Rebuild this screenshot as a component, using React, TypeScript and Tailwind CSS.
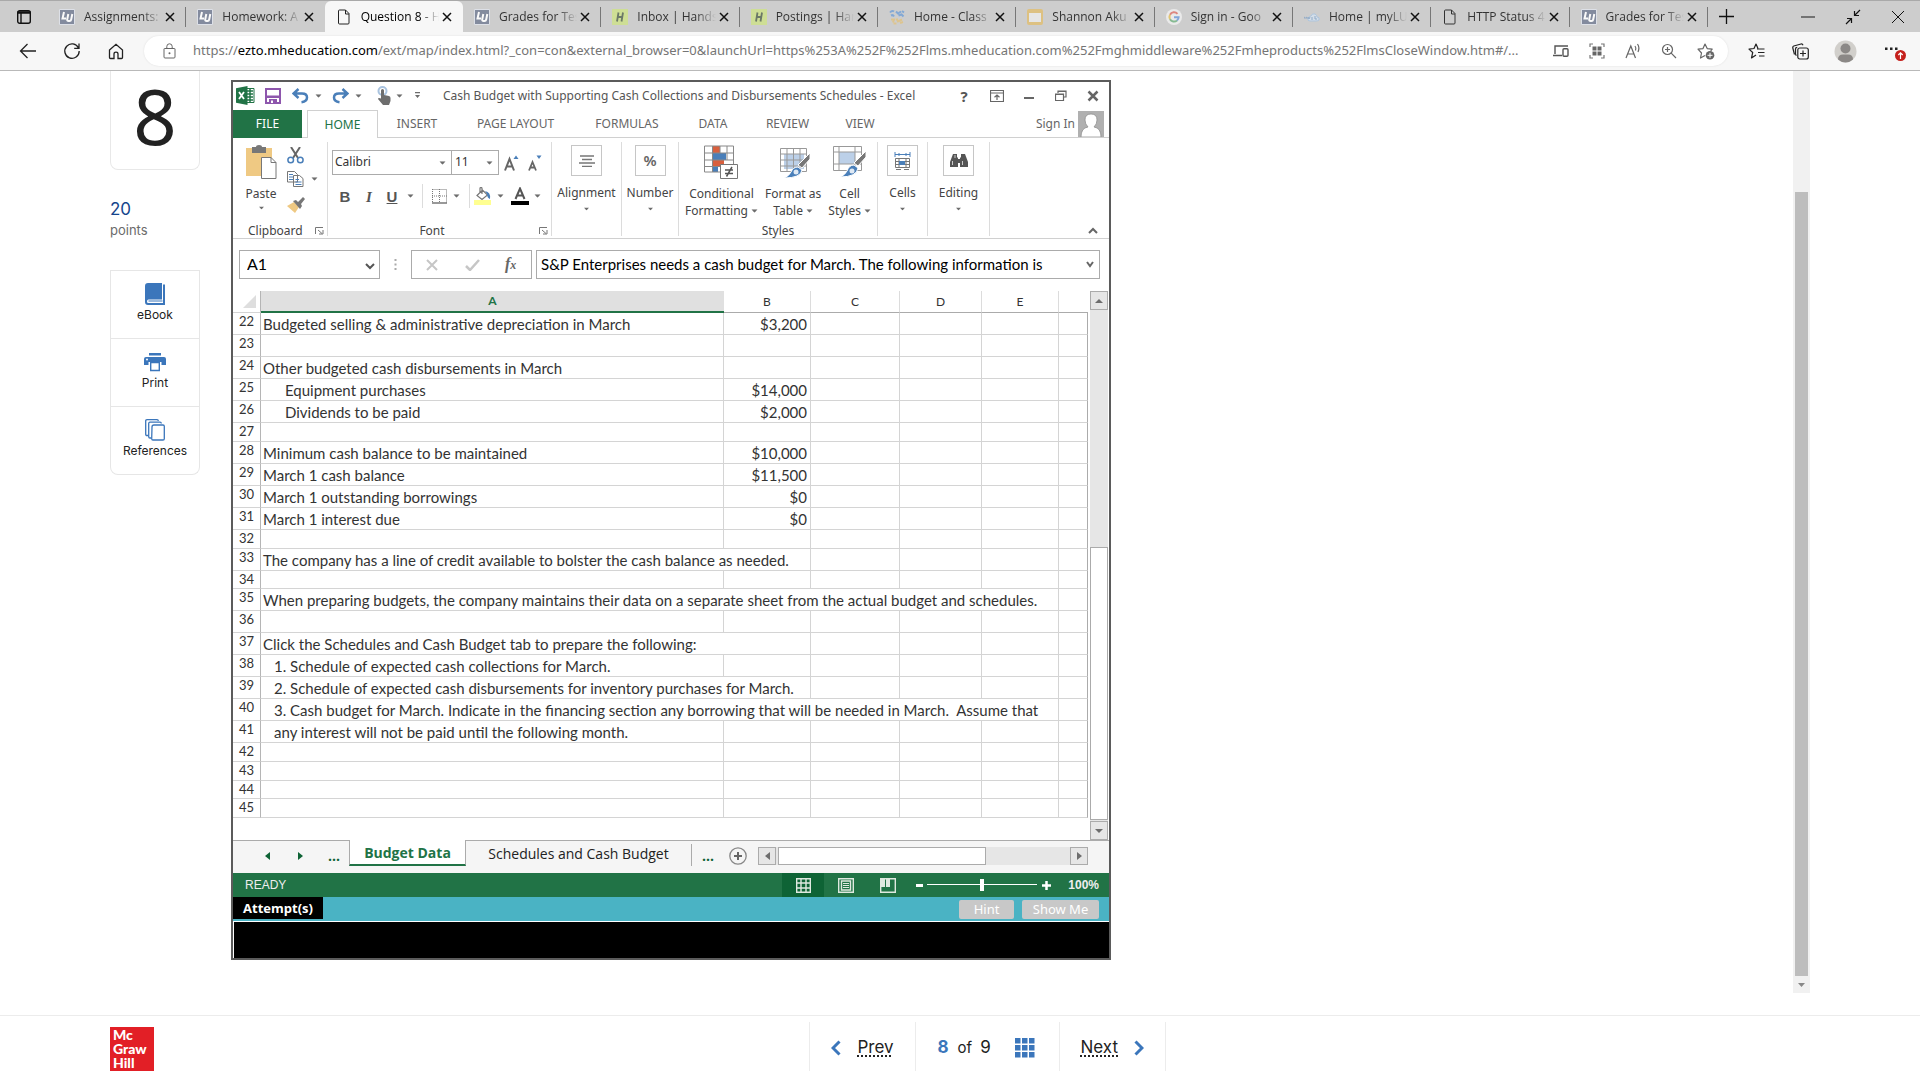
import { useState, type ReactNode } from 'react'

type TabInfo = { title: string; icon: string }

const TABS: TabInfo[] = [
    { title: 'Assignments:', icon: 'lu' },
    { title: 'Homework: A', icon: 'lu' },
    { title: 'Question 8 - H', icon: 'page' },
    { title: 'Grades for Tes', icon: 'lu' },
    { title: 'Inbox | Hands', icon: 'h' },
    { title: 'Postings | Han', icon: 'h' },
    { title: 'Home - Class', icon: 'people' },
    { title: 'Shannon Aku', icon: 'slides' },
    { title: 'Sign in - Goo', icon: 'google' },
    { title: 'Home | myLU', icon: 'cloud' },
    { title: 'HTTP Status 4', icon: 'page' },
    { title: 'Grades for Tes', icon: 'lu' },
]

type Row = { n: number; h: string; text?: string; amount?: string; indent?: string; span?: number }

const TALL = 'h-[22px]'
const SHORT = 'h-[19px]'

const ROWS: Row[] = [
    { n: 22, h: TALL, text: 'Budgeted selling & administrative depreciation in March', amount: '$3,200' },
    { n: 23, h: TALL },
    { n: 24, h: TALL, text: 'Other budgeted cash disbursements in March' },
    { n: 25, h: TALL, text: 'Equipment purchases', amount: '$14,000', indent: 'pl-[24px]' },
    { n: 26, h: TALL, text: 'Dividends to be paid', amount: '$2,000', indent: 'pl-[24px]' },
    { n: 27, h: SHORT },
    { n: 28, h: TALL, text: 'Minimum cash balance to be maintained', amount: '$10,000' },
    { n: 29, h: TALL, text: 'March 1 cash balance', amount: '$11,500' },
    { n: 30, h: TALL, text: 'March 1 outstanding borrowings', amount: '$0' },
    { n: 31, h: TALL, text: 'March 1 interest due', amount: '$0' },
    { n: 32, h: SHORT },
    { n: 33, h: TALL, text: 'The company has a line of credit available to bolster the cash balance as needed.', span: 2 },
    { n: 34, h: 'h-[18px]' },
    { n: 35, h: TALL, text: 'When preparing budgets, the company maintains their data on a separate sheet from the actual budget and schedules.', span: 5 },
    { n: 36, h: TALL },
    { n: 37, h: TALL, text: 'Click the Schedules and Cash Budget tab to prepare the following:', span: 2 },
    { n: 38, h: TALL, text: '1. Schedule of expected cash collections for March.', indent: 'pl-[13px]' },
    { n: 39, h: TALL, text: '2. Schedule of expected cash disbursements for inventory purchases for March.', indent: 'pl-[13px]', span: 2 },
    { n: 40, h: TALL, text: '3. Cash budget for March. Indicate in the financing section any borrowing that will be needed in March.\u00a0 Assume that', indent: 'pl-[13px]', span: 5 },
    { n: 41, h: TALL, text: 'any interest will not be paid until the following month.', indent: 'pl-[13px]' },
    { n: 42, h: SHORT },
    { n: 43, h: SHORT },
    { n: 44, h: 'h-[18px]' },
    { n: 45, h: SHORT },
]

const COLS = ['A', 'B', 'C', 'D', 'E', '']

function Svg({ w, h, box, className = '', children }: { w: number; h: number; box?: string; className?: string; children: ReactNode }) {
    return (
        <svg width={w} height={h} viewBox={box ?? `0 0 ${w} ${h}`} fill="none" className={`shrink-0 ${className}`} aria-hidden="true">
            {children}
        </svg>
    )
}

function Caret({ className = '' }: { className?: string }) {
    return (
        <Svg w={7} h={4} className={className}>
            <path d="M0 0h7L3.500 4z" fill="#6d6d6d" />
        </Svg>
    )
}

function Launcher({ className = '' }: { className?: string }) {
    return (
        <button aria-label="More options" className={className}>
            <Svg w={9} h={8}>
                <path d="M.5 7V.5H8M3 3l4 3.500M8 3v4H4" stroke="#777" />
            </Svg>
        </button>
    )
}

function Favicon({ kind }: { kind: string }) {
    if (kind === 'lu')
        return (
            <Svg w={16} h={16}>
                <path d="M.5.500h15v15H.5z" fill="#7b8499" stroke="#dfe3ea" />
                <path d="M5 3L3.500 9.500H7M9.300 5L8.200 10.500q-.2 1.500 1.300 1.500h1q1.400 0 1.700-1.500L13.300 5" stroke="#fff" strokeWidth="2" />
            </Svg>
        )
    if (kind === 'page')
        return (
            <Svg w={14} h={16}>
                <path d="M2.500 1h6L12 4.500V14q0 1-1 1H2.500q-1 0-1-1V2q0-1 1-1zM8.500 1v4H12" stroke="#222" />
            </Svg>
        )
    if (kind === 'h')
        return (
            <Svg w={16} h={16}>
                <path d="M0 0h16v16H0z" fill="#cfe08f" />
                <path d="M6.500 3.500L5 12.500M11 3.500L9.500 12.500M6 8h4.500" stroke="#61705c" strokeWidth="1.800" />
            </Svg>
        )
    if (kind === 'people')
        return (
            <Svg w={16} h={16}>
                <path d="M1 3.500q2-2.500 4-1M2 6.500q2-1 3 1M7 2.500l2 2 3-2M9.500 6.500l3-1 2 2M13 2l2 1.500" stroke="#7ba5d6" strokeWidth="2" />
                <path d="M2 10.500h3l-1 3M7.500 9.500l1.500 3 4-2M4.500 14.500h3M11 14l3-1" stroke="#dfc489" strokeWidth="2" />
            </Svg>
        )
    if (kind === 'slides')
        return (
            <Svg w={16} h={16}>
                <rect width="16" height="16" rx="2" fill="#dfc07a" />
                <path d="M2 4h12v9H2z" fill="#e9e9e9" />
            </Svg>
        )
    if (kind === 'google')
        return (
            <Svg w={16} h={16}>
                <circle cx="8" cy="8" r="8" fill="#eee" />
                <path d="M11.500 4.800A4.600 4.600 0 0 0 4 5.800" stroke="#df8078" strokeWidth="2" />
                <path d="M4 5.800a4.600 4.600 0 0 0 0 4.400" stroke="#e5c568" strokeWidth="2" />
                <path d="M4 10.200a4.600 4.600 0 0 0 7 1.300" stroke="#7fb88c" strokeWidth="2" />
                <path d="M11 11.500a4.600 4.600 0 0 0 1.600-3.300H8" stroke="#7aa2dc" strokeWidth="2" />
            </Svg>
        )
    return (
        <Svg w={16} h={16}>
            <path d="M6 12q-3 0-2-3 1-2 3-2 1-3 4-2 2 1 2 3 3 0 2 3-1 1-3 1z" stroke="#a9c3df" fill="#d5e0ec" />
            <path d="M0 10V8l1.500 1L3 8v2M4 8l1 2 1-2M8 8v3M11 7v3h2" stroke="#8aa7c6" />
        </Svg>
    )
}

function BrowserTabs() {
    const [active, setActive] = useState(2)
    return (
        <div className="flex h-8 border-t border-[#a9a9a9] bg-[#cdcdcd] text-[12px]">
            <button aria-label="Tab actions" className="flex w-[48px] shrink-0 items-center justify-center">
                <Svg w={16} h={16}>
                    <rect x="1.700" y="1.700" width="12.600" height="12.600" rx="2" stroke="#111" strokeWidth="1.400" />
                    <path d="M1.500 3.500h13" stroke="#111" strokeWidth="2.500" />
                    <path d="M5 4v10" stroke="#111" strokeWidth="1.400" />
                </Svg>
            </button>
            <div className="flex w-[1660px] min-w-0">
                {TABS.map((tab, i) => (
                    <div
                        key={i}
                        className={
                            i === active
                                ? 'flex min-w-0 flex-1 items-center rounded-t-md bg-[#f7f7f7] pr-[8px] pl-[11px] text-black'
                                : 'flex min-w-0 flex-1 items-center pr-[8px] pl-[11px] text-[#333]'
                        }
                    >
                        <span className={i === active ? 'flex w-4 justify-center' : 'flex w-4 justify-center opacity-90'}>
                            <Favicon kind={tab.icon} />
                        </span>
                        <button
                            onClick={() => setActive(i)}
                            className="ml-[9px] min-w-0 flex-1 mask-r-from-75% text-left whitespace-nowrap"
                        >
                            {tab.title}
                        </button>
                        <button aria-label="Close tab" className="flex w-4 justify-center">
                            <Svg w={10} h={10}>
                                <path d="M1 1l8 8M9 1L1 9" stroke="#111" strokeWidth="1.500" />
                            </Svg>
                        </button>
                        <span className={i === active || i === active - 1 ? '-mr-[8px] ml-[7px] w-px' : '-mr-[8px] ml-[7px] h-5 w-px bg-[#777]'} />
                    </div>
                ))}
            </div>
            <button aria-label="New tab" className="flex w-9 shrink-0 items-center justify-center">
                <Svg w={15} h={15}>
                    <path d="M7.500 0v15M0 7.500h15" stroke="#111" strokeWidth="1.300" />
                </Svg>
            </button>
            <div className="ml-auto flex items-center">
                <button aria-label="Minimize" className="flex w-[45px] justify-center">
                    <Svg w={14} h={14}><path d="M0 7h14" stroke="#555" strokeWidth="1.500" /></Svg>
                </button>
                <button aria-label="Restore" className="flex w-[45px] justify-center">
                    <Svg w={16} h={16}><path d="M15 1L9.500 6.500M9.500 2v4.500H14M1 15l5.500-5.500M2 9.500h4.500V14" stroke="#111" strokeWidth="1.200" /></Svg>
                </button>
                <button aria-label="Close" className="flex w-[45px] justify-center">
                    <Svg w={12} h={12}><path d="M0 0l12 12M12 0L0 12" stroke="#111" /></Svg>
                </button>
            </div>
        </div>
    )
}

function AddressBar() {
    return (
        <div className="flex h-[39px] items-center border-b border-[#b9b9b9] bg-[#f7f7f7]">
            <button aria-label="Back" className="ml-[19px]">
                <Svg w={18} h={16}><path d="M17 8H1.500M8.500 1L1.500 8l7 7" stroke="#222" strokeWidth="1.300" /></Svg>
            </button>
            <button aria-label="Refresh" className="ml-[26px]">
                <Svg w={18} h={18}>
                    <path d="M15.500 6A7.200 7.200 0 1 0 16.200 9M16 1.500V6.300H11.200" stroke="#222" strokeWidth="1.300" />
                </Svg>
            </button>
            <button aria-label="Home" className="ml-[27px]">
                <Svg w={16} h={17}>
                    <path d="M1.500 7L8 1.300 14.500 7v7.500q0 1-1 1H10V11q0-1.800-2-1.800T6 11v4.500H2.500q-1 0-1-1z" stroke="#222" strokeWidth="1.300" />
                </Svg>
            </button>
            <div className="ml-[20px] flex h-[30px] min-w-0 flex-1 items-center rounded-full bg-white pr-[13px] pl-[19px] shadow-[0_0_2px_#ddd]">
                <Svg w={13} h={16}>
                    <path d="M1.500 5.500h10q.5 0 .5.500v8q0 1-1 1H2q-1 0-1-1V6q0-.5.5-.5zM3.800 5.500V3.500a2.700 2.700 0 0 1 5.400 0v2" stroke="#666" />
                    <circle cx="6.500" cy="10.200" r="1" fill="#666" />
                </Svg>
                <a href="#url" className="ml-[17px] min-w-0 flex-1 font-['Noto_Sans',sans-serif] text-[13px] whitespace-nowrap text-[#757575]">
                    https://<span className="text-black">ezto.mheducation.com</span>/ext/map/index.html?_con=con&amp;external_browser=0&amp;launchUrl=https%253A%252F%252Flms.mheducation.com%252Fmghmiddleware%252Fmheproducts%252FlmsCloseWindow.htm#/...
                </a>
                <div className="ml-[12px] flex shrink-0 items-center gap-[20px]">
                    <button aria-label="Send to device">
                        <Svg w={16} h={12}>
                            <path d="M15 1H2v8M0 10.500h9" stroke="#555" strokeWidth="1.400" />
                            <rect x="10" y="3.700" width="5" height="7.500" rx="1" stroke="#555" strokeWidth="1.400" />
                        </Svg>
                    </button>
                    <button aria-label="Apps">
                        <Svg w={16} h={16}>
                            <path d="M1 4V1h3M12 1h3v3M15 12v3h-3M4 15H1v-3" stroke="#777" strokeWidth="1.200" />
                            <path d="M3.500 3.500h4v4h-4zM8.500 3.500h4v4h-4zM3.500 8.500h4v4h-4zM8.500 8.500h4v4h-4z" fill="#666" />
                        </Svg>
                    </button>
                    <button aria-label="Read aloud">
                        <Svg w={16} h={16}>
                            <path d="M1 15L5.800 3 10.500 15M2.800 11h6M10 3q1.500 2 .5 4.500M12.500 1q2.500 3.500.5 8" stroke="#666" strokeWidth="1.200" />
                        </Svg>
                    </button>
                    <button aria-label="Zoom in">
                        <Svg w={16} h={16}>
                            <circle cx="6.500" cy="6.500" r="5" stroke="#666" strokeWidth="1.200" />
                            <path d="M10.200 10.200L15 15M6.500 4v5M4 6.500h5" stroke="#666" strokeWidth="1.200" />
                        </Svg>
                    </button>
                    <button aria-label="Add to favorites">
                        <Svg w={18} h={17}>
                            <path d="M8 12.500L3.500 15l1-5L1 6.200l5-.6L8 1l2.200 4.600 5 .6-1.500 1.600" stroke="#666" strokeWidth="1.200" strokeLinejoin="round" />
                            <circle cx="13" cy="12.300" r="4.300" fill="#666" />
                            <path d="M13 9.800v5M10.500 12.300h5" stroke="#fff" />
                        </Svg>
                    </button>
                </div>
            </div>
            <button aria-label="Favorites" className="ml-[20px]">
                <Svg w={17} h={16}>
                    <path d="M10 5.500L8 1 6 5.500l-5 .6 3.700 3.400L3.500 15 8 12M9 6h7.500M10 9.500h6.500M11 13h5.500" stroke="#222" strokeWidth="1.200" strokeLinejoin="round" />
                </Svg>
            </button>
            <button aria-label="Collections" className="ml-[27px]">
                <Svg w={17} h={17}>
                    <path d="M2.500 11.500L.8 5q-.3-1.500 1-2L9 1q1.500-.3 2 1.200" stroke="#222" strokeWidth="1.200" />
                    <path d="M4.500 12.500q-1-.5-1-1.800V6q0-1.700 1.700-1.700" stroke="#222" strokeWidth="1.200" />
                    <rect x="5.800" y="5" width="10.500" height="11" rx="2" stroke="#222" strokeWidth="1.200" />
                    <path d="M11 7.500v6M8 10.500h6" stroke="#222" strokeWidth="1.200" />
                </Svg>
            </button>
            <button aria-label="Profile" className="ml-[25px]">
                <Svg w={23} h={23}>
                    <circle cx="11.500" cy="11.500" r="11" fill="#d1cfcb" />
                    <circle cx="11.500" cy="8.500" r="5" fill="#8b8886" />
                    <path d="M4 19.500q0-5 5-5h5q5 0 5 5a11 11 0 0 1-15 0z" fill="#8b8886" />
                </Svg>
            </button>
            <button aria-label="Settings and more" className="mr-[13px] ml-[27px] pt-[3px]">
                <Svg w={23} h={20}>
                    <path d="M1 4.500h2.500V7H1zM6 4.500h2.500V7H6zM11 4.500h2.500V7H11z" fill="#222" />
                    <circle cx="16.500" cy="12.500" r="5.500" fill="#c5201c" />
                    <path d="M16.500 16v-6M14.300 12l2.200-2.200 2.200 2.200" stroke="#fff" strokeWidth="1.200" />
                </Svg>
            </button>
        </div>
    )
}

function SideCard({ label, children }: { label: string; children: ReactNode }) {
    return (
        <button className="flex h-[68px] w-full flex-col items-center border-t border-[#e6e6e6] pt-[12px] text-[12px] leading-[18px] text-[#222]">
            {children}
            {label}
        </button>
    )
}

function Sidebar() {
    return (
        <aside className="w-[90px] shrink-0 font-[Inter,'Liberation_Sans',sans-serif]">
            <div className="flex h-[99px] justify-center rounded-b-lg border border-t-0 border-[#e8e8e8] font-['Noto_Sans',sans-serif] text-[76px] leading-[90px] text-[#222]">
                8
            </div>
            <div className="mt-[27px] text-[17px] leading-[24px] text-[#15458c]">20</div>
            <div className="text-[13px] leading-[18px] text-[#6b6b6b]">points</div>
            <div className="mt-[31px] rounded-b-lg border border-t-0 border-[#e6e6e6]">
                <SideCard label="eBook">
                    <Svg w={20} h={23}>
                        <path d="M3 0h14v16.500H3.500Q2 16.500 2 18.500t2 1.500H18V1.500h2V22H3Q0 22 0 19V3q0-3 3-3z" fill="#3b76bb" />
                        <path d="M3.500 18h14" stroke="#3b76bb" />
                    </Svg>
                </SideCard>
                <SideCard label="Print">
                    <Svg w={22} h={23}>
                        <path d="M5 2h12v2.500H5zM2 6h18q2 0 2 2v6h-4.500v-3h-13v3H0V8q0-2 2-2z" fill="#3b76bb" />
                        <path d="M6.700 11.500h8.600v8H6.700z" stroke="#3b76bb" strokeWidth="1.400" fill="#fff" />
                        <circle cx="3" cy="8.500" r="1" fill="#fff" />
                    </Svg>
                </SideCard>
                <SideCard label="References">
                    <Svg w={20} h={23}>
                        <path d="M3 16.500H2q-1.300 0-1.300-1.300V2Q.7.700 2 .7h10q1.300 0 1.300 1.300M6 19H5q-1.300 0-1.300-1.300V4.500Q3.700 3.200 5 3.200h10q1.300 0 1.300 1.300" stroke="#3b76bb" strokeWidth="1.300" />
                        <path d="M7 8q0-2 2-2h9q1.300 0 1.300 1.300v12.400q0 1.300-1.300 1.300H8q-1.300 0-1.300-1.300z" stroke="#3b76bb" strokeWidth="1.300" />
                    </Svg>
                </SideCard>
            </div>
        </aside>
    )
}

function TitleBar() {
    return (
        <div className="flex h-7 items-center pb-px pl-[3px] text-[12px] text-[#555]">
            <Svg w={19} h={19}>
                <path d="M10 2.500h8v14h-8z" fill="#fff" stroke="#217346" />
                <path d="M11 5h6M11 8h6M11 11h6M11 14h6M14 3v13" stroke="#217346" strokeWidth="1.500" />
                <path d="M0 2.200L11.500 0v19L0 16.800z" fill="#217346" />
                <path d="M3 6l5 7M8 6l-5 7" stroke="#fff" strokeWidth="1.800" />
            </Svg>
            <button aria-label="Save" className="ml-[10px]">
                <Svg w={16} h={16}>
                    <path d="M1 1h14v14H1z" stroke="#8e56ad" strokeWidth="2" fill="#fff" />
                    <path d="M1 7.500h14V10H1zM4 11h8v5H4z" fill="#8e56ad" />
                    <path d="M6 12.500h2V15H6z" fill="#fff" />
                </Svg>
            </button>
            <button aria-label="Undo" className="ml-[11px]">
                <Svg w={17} h={16}><path d="M6.500 1L1.500 5.500l5 4.500M2 5.500h8q5 0 5 4t-5.500 4.700" stroke="#4a7fb9" strokeWidth="2.500" /></Svg>
            </button>
            <Caret className="ml-[6px] scale-90" />
            <button aria-label="Redo" className="ml-[10px]">
                <Svg w={17} h={16}><path d="M10.500 1l5 4.500-5 4.500M15 5.500H7q-5 0-5 4t5.500 4.700" stroke="#4a7fb9" strokeWidth="2.500" /></Svg>
            </button>
            <Caret className="ml-[6px] scale-90" />
            <button aria-label="Touch mode" className="ml-[15px]">
                <Svg w={14} h={19}>
                    <circle cx="5.500" cy="5" r="4" stroke="#a9c3df" strokeWidth="2" />
                    <path d="M4 4.500q0-1.500 1.500-1.500T7 4.500V9l5 1q1.500.4 1.500 2v3l-1.500 4H6l-5-6q0-1.500 3-.5z" fill="#6d6d6d" />
                </Svg>
            </button>
            <Caret className="ml-[5px] scale-90" />
            <Svg w={7} h={7} className="ml-[11px]"><path d="M1 0h5v1.200H1zM1 3h5L3.500 6z" fill="#6d6d6d" /></Svg>
            <h1 className="ml-[22px] whitespace-nowrap">Cash Budget with Supporting Cash Collections and Disbursements Schedules - Excel</h1>
            <div className="ml-auto flex items-center">
                <button aria-label="Help" className="w-[34px] text-[15px] leading-[18px] font-bold">?</button>
                <button aria-label="Ribbon options" className="flex w-[32px] justify-center">
                    <Svg w={14} h={12}><path d="M.5.500h13v11H.5zM.5 3h13M7 10V5M4.500 7.300L7 5l2.500 2.300" stroke="#666" strokeWidth="1.200" /></Svg>
                </button>
                <button aria-label="Minimize window" className="flex w-[32px] justify-center">
                    <Svg w={10} h={12}><path d="M0 8h10" stroke="#666" strokeWidth="2" /></Svg>
                </button>
                <button aria-label="Restore window" className="flex w-[32px] justify-center">
                    <Svg w={12} h={12}><path d="M3 3V1h8v6H9M.5 4h8v6.500h-8zM3 1.500h8M.5 4.500h8" stroke="#666" strokeWidth="1.200" /></Svg>
                </button>
                <button aria-label="Close window" className="flex w-[32px] justify-center">
                    <Svg w={12} h={12}><path d="M1.500 1.500l9 9M10.500 1.500l-9 9" stroke="#666" strokeWidth="2.500" /></Svg>
                </button>
            </div>
        </div>
    )
}

function RibbonTabs() {
    return (
        <div className="flex h-7 items-center border-b border-[#d0d0d0] text-[12px] text-[#666]">
            <button className="h-7 w-[69px] bg-[#217346] text-white">FILE</button>
            <button className="-mb-px ml-[5px] h-7 w-[71px] border border-b-0 border-[#d0d0d0] bg-white text-[#217346]">HOME</button>
            <button className="w-[78px]">INSERT</button>
            <button className="w-[119px]">PAGE LAYOUT</button>
            <button className="w-[104px]">FORMULAS</button>
            <button className="w-[68px]">DATA</button>
            <button className="w-[81px]">REVIEW</button>
            <button className="w-[64px]">VIEW</button>
            <a href="#signin" className="ml-auto">Sign In</a>
            <Svg w={26} h={26} className="mr-[5px] ml-[3px]">
                <path d="M0 0h26v26H0z" fill="#b0b0b0" />
                <path d="M3 26q0-9 7-10-3-3-3-7 0-6 6-6t6 6q0 4-3 7 7 1 7 10z" fill="#fff" stroke="#888" strokeWidth=".7" />
            </Svg>
        </div>
    )
}

function Group({ width, children }: { width: string; children: ReactNode }) {
    return <div className={`flex h-[94px] shrink-0 flex-col border-r border-[#dcdcdc] ${width}`}>{children}</div>
}

function BoxedGroup({ width, label, children }: { width: string; label: string; children: ReactNode }) {
    return (
        <Group width={width}>
            <button className="flex flex-col items-center">
                <span className="mt-[3px] flex size-[31px] items-center justify-center border border-[#c6c6c6]">{children}</span>
                <span className="mt-[8px] leading-[18px]">{label}</span>
                <Caret className="mt-[5px] scale-75" />
            </button>
        </Group>
    )
}

function StyleButton({ first, second, children }: { first: string; second: string; children: ReactNode }) {
    return (
        <button className="flex flex-col items-center leading-[17px]">
            {children}
            <span className="mt-[6px] whitespace-nowrap">{first}</span>
            <span className="flex items-center gap-[3px]">
                {second}
                <Caret className="scale-90" />
            </span>
        </button>
    )
}

function Ribbon() {
    return (
        <div className="flex h-[101px] border-b border-[#d0d0d0] pt-[4px] text-[12px] text-[#444]">
            <Group width="w-[95px]">
                <div className="flex pl-[12px]">
                    <button className="mt-[3px] flex w-[32px] flex-col items-center">
                        <Svg w={31} h={34}>
                            <path d="M0 3h26v28H0z" fill="#efc983" />
                            <path d="M6 2h4q0-2 3-2t3 2h4v6H6z" fill="#777" />
                            <path d="M15.500 12.500H25l5 5v16H15.500z" fill="#fff" stroke="#777" />
                            <path d="M25 12.500v5h5" stroke="#777" />
                        </Svg>
                        <span className="mt-[6px] leading-[17px]">Paste</span>
                        <Caret className="mt-[4px] scale-75" />
                    </button>
                    <div className="ml-[10px] flex flex-col">
                        <button aria-label="Cut" className="mt-[5px]">
                            <Svg w={17} h={17}>
                                <path d="M4 0l7 11M13 0L6 11" stroke="#666" strokeWidth="2" />
                                <circle cx="3.700" cy="13" r="2.800" stroke="#4a7fb9" strokeWidth="1.500" />
                                <circle cx="13.300" cy="13" r="2.800" stroke="#4a7fb9" strokeWidth="1.500" />
                            </Svg>
                        </button>
                        <button aria-label="Copy" className="mt-[7px]">
                            <Svg w={17} h={16}>
                                <path d="M.5.500h7l3 3V11H.5zM6.500 4.500h6l3.500 3v8H6.500z" fill="#fff" stroke="#777" />
                                <path d="M2 3.500h4M2 6h4M2 8.500h4M8.500 8.500H12M8.500 11h6M8.500 13.500h6" stroke="#4a7fb9" />
                            </Svg>
                        </button>
                        <button aria-label="Format painter" className="mt-[10px]">
                            <Svg w={18} h={16}>
                                <path d="M0 9l7-4 5 5-4 6z" fill="#efc983" />
                                <path d="M6 4l3-1 2 2 5-5 2 2-4 5 1 2-2 3z" fill="#777" />
                            </Svg>
                        </button>
                    </div>
                    <Caret className="mt-[35px] ml-[6px] scale-90" />
                </div>
                <div className="mt-auto flex items-center pl-[15px] leading-[10px]">
                    Clipboard
                    <Launcher className="mr-[3px] ml-auto" />
                </div>
            </Group>
            <Group width="w-[224px]">
                <div className="mt-[8px] flex h-[25px] pl-[4px]">
                    <label className="relative flex w-[120px] items-center border border-[#ababab]">
                        <select aria-label="Font" className="h-full w-full appearance-none pb-[2px] pl-[2px] text-[#333]" defaultValue="Calibri">
                            <option>Calibri</option>
                        </select>
                        <Caret className="pointer-events-none absolute right-[5px] scale-90" />
                    </label>
                    <label className="relative flex w-[47px] items-center border border-l-0 border-[#ababab]">
                        <select aria-label="Font size" className="h-full w-full appearance-none pb-[2px] pl-[3px] text-[#333]" defaultValue="11">
                            <option>11</option>
                        </select>
                        <Caret className="pointer-events-none absolute right-[5px] scale-90" />
                    </label>
                    <button aria-label="Increase font size" className="ml-[5px] pt-px">
                        <Svg w={15} h={16}>
                            <path d="M1 15.500L5.500 4 10 15.500M2.800 11.500h5.500" stroke="#666" strokeWidth="2" />
                            <path d="M9.500 4L12 .5 14.500 4z" fill="#4a7fb9" />
                        </Svg>
                    </button>
                    <button aria-label="Decrease font size" className="ml-[9px] pt-px">
                        <Svg w={14} h={16}>
                            <path d="M1 15.500L4.500 7 8 15.500M2.500 12.500h4" stroke="#666" strokeWidth="1.800" />
                            <path d="M8.500.5L11 4 13.500.5z" fill="#4a7fb9" />
                        </Svg>
                    </button>
                </div>
                <div className="mt-[8px] flex h-[26px] items-center pl-[9px] font-['Liberation_Sans',sans-serif] text-[15px] text-[#555]">
                    <button aria-label="Bold" className="w-[16px] pt-[2px] font-bold">B</button>
                    <button aria-label="Italic" className="ml-[9px] w-[14px] pt-[2px] font-['Liberation_Serif',serif] font-bold italic">I</button>
                    <button aria-label="Underline" className="ml-[9px] w-[14px] pt-[2px] font-bold underline">U</button>
                    <Caret className="ml-[8px] scale-90" />
                    <span className="ml-[8px] h-6 w-px bg-[#dcdcdc]" />
                    <button aria-label="Borders" className="ml-[9px]">
                        <Svg w={15} h={15}>
                            <path d="M.5.500h14v13M.5 0v14M7.500 0v14M0 7h15" stroke="#777" strokeDasharray="1 1" />
                            <path d="M0 14h15" stroke="#777" strokeWidth="1.500" />
                        </Svg>
                    </button>
                    <Caret className="ml-[6px] scale-90" />
                    <span className="ml-[9px] h-6 w-px bg-[#dcdcdc]" />
                    <button aria-label="Fill color" className="ml-[4px]">
                        <Svg w={18} h={18}>
                            <path d="M3 8.500L8.500 3l5 5-5.500 4.500zM6 5V1.500q0-1 1-1t1 1V7" stroke="#777" strokeWidth="1.200" fill="#fff" />
                            <path d="M11 4q6 1 5 8-3-1-3-5z" fill="#4a7fb9" />
                            <path d="M0 13h17v5H0z" fill="#ffff91" />
                        </Svg>
                    </button>
                    <Caret className="ml-[5px] scale-90" />
                    <button aria-label="Font color" className="ml-[7px]">
                        <Svg w={18} h={18}>
                            <path d="M4.500 12L9 1.500 13.500 12M6 8.500h6" stroke="#555" strokeWidth="2" />
                            <path d="M0 14h18v4H0z" fill="#000" />
                        </Svg>
                    </button>
                    <Caret className="ml-[5px] scale-90" />
                </div>
                <div className="mt-auto flex items-center leading-[10px]">
                    <span className="flex-1 pr-[3px] text-center">Font</span>
                    <Launcher className="mr-[3px]" />
                </div>
            </Group>
            <BoxedGroup width="w-[70px]" label="Alignment">
                <Svg w={16} h={12}><path d="M1 1h14M3 4.500h10M0 8h16M3 11.500h10" stroke="#777" strokeWidth="1.400" /></Svg>
            </BoxedGroup>
            <BoxedGroup width="w-[57px]" label="Number">
                <span className="text-[15px] font-semibold text-[#666]">%</span>
            </BoxedGroup>
            <Group width="w-[199px]">
                <div className="mt-[3px] flex justify-center gap-[7px]">
                    <StyleButton first="Conditional" second="Formatting">
                        <Svg w={34} h={34}>
                            <path d="M.5 1h29v26H.5z" fill="#fff" />
                            <path d="M9 1h7v7H9zM9 15h11v7H9z" fill="#d9603e" />
                            <path d="M9 8h13v7H9zM9 22h5v5H9z" fill="#4a7fb9" />
                            <path d="M.5 1h29v26H.5zM.5 8h29M.5 15h29M.5 21.500h29M8.500 1v26M16 1v7M23 1v14" stroke="#888" />
                            <path d="M16.500 19.500h17v14h-17z" fill="#fff" stroke="#777" />
                            <path d="M21 25h8M21 28.500h8M28 22l-5.500 9.500" stroke="#555" strokeWidth="1.500" />
                        </Svg>
                    </StyleButton>
                    <StyleButton first="Format as" second="Table">
                        <Svg w={33} h={34}>
                            <path d="M7 9h20v15H7z" fill="#bcd0e8" />
                            <path d="M3.500 3.500h26v23h-26zM3.500 9h26M3.500 15h26M3.500 21h26M10 3.500v23M16.500 3.500v23M23 3.500v23" stroke="#999" />
                            <path d="M33 8v6l-8 9-4-3z" fill="#777" stroke="#fff" />
                            <path d="M21 22l4 3q-1 8-18 8 5-2 7-6 2-5 7-5z" fill="#4a7fb9" stroke="#fff" />
                            <circle cx="19" cy="27" r="2.500" fill="#dfe9f4" />
                        </Svg>
                    </StyleButton>
                    <StyleButton first="Cell" second="Styles">
                        <Svg w={33} h={34}>
                            <path d="M6 7h16v12H6z" fill="#bcd0e8" />
                            <path d="M.5 1.500h28v24H.5zM.5 7h28M.5 19h28M6 1.500v24M22 1.500v24" stroke="#999" />
                            <path d="M33 6v6l-8 9-4-3z" fill="#777" stroke="#fff" />
                            <path d="M21 20l4 3q-1 9-18 9 5-2 7-6 2-6 7-6z" fill="#4a7fb9" stroke="#fff" />
                            <circle cx="19" cy="26" r="2.500" fill="#dfe9f4" />
                        </Svg>
                    </StyleButton>
                </div>
                <span className="mt-auto text-center leading-[10px]">Styles</span>
            </Group>
            <BoxedGroup width="w-[50px]" label="Cells">
                <Svg w={17} h={18}>
                    <path d="M1 2.500h15M1 0v5M16 0v5M5 1v3M12 1v3" stroke="#4a7fb9" />
                    <path d="M1.500 6.500h14v9h-14zM1.500 9.500h14M1.500 12.500h14M5 6.500v9M12 6.500v9M2 17.500h5M10 17.500h5" stroke="#777" />
                    <path d="M5 9h6v4H5z" fill="#4a7fb9" />
                </Svg>
            </BoxedGroup>
            <BoxedGroup width="w-[62px]" label="Editing">
                <Svg w={18} h={15}>
                    <path d="M3 1h4v3l1 1v9H0V9zM11 1h4l3 8v5h-8V5l1-1zM7 6h4v4H7z" fill="#555" />
                    <path d="M2.500 8v4M12.500 8v4M5 2v3" stroke="#ccc" />
                </Svg>
            </BoxedGroup>
            <button aria-label="Collapse ribbon" className="mt-auto mr-[11px] mb-[4px] ml-auto">
                <Svg w={10} h={7}><path d="M1 6l4-4 4 4" stroke="#666" strokeWidth="2" /></Svg>
            </button>
        </div>
    )
}

function FormulaBar() {
    return (
        <div className="flex h-[52px] items-center pr-[9px] pb-px pl-[6px] font-[Lato,sans-serif] text-[15px] text-black">
            <label className="relative flex h-[29px] w-[141px] shrink-0 items-center border border-[#ababab]">
                <select aria-label="Name box" className="h-full w-full appearance-none pb-[2px] pl-[7px] text-[16px]" defaultValue="A1">
                    <option>A1</option>
                </select>
                <Svg w={10} h={7} className="pointer-events-none absolute right-[4px] bottom-[8px]"><path d="M1 1l4 4 4-4" stroke="#555" strokeWidth="2" /></Svg>
            </label>
            <Svg w={3} h={12} className="mx-[14px]"><path d="M1.500 0v12" stroke="#aaa" strokeWidth="2" strokeDasharray="2 2.500" /></Svg>
            <div className="flex h-[29px] w-[121px] shrink-0 items-center border border-[#ababab] pl-[14px]">
                <button aria-label="Cancel"><Svg w={12} h={12}><path d="M1 1l10 10M11 1L1 11" stroke="#c6c6c6" strokeWidth="2" /></Svg></button>
                <button aria-label="Enter" className="ml-[27px]"><Svg w={15} h={12}><path d="M1 7l4 4 9-10" stroke="#c6c6c6" strokeWidth="2.500" /></Svg></button>
                <button aria-label="Insert function" className="ml-[25px] font-['Liberation_Serif',serif] text-[16px] leading-[18px] font-bold text-[#666] italic">
                    f<span className="text-[12px]">x</span>
                </button>
            </div>
            <div className="ml-[4px] flex h-[29px] min-w-0 flex-1 items-center border border-[#ababab] pr-[5px]">
                <input
                    aria-label="Formula"
                    className="h-full min-w-0 flex-1 pb-[2px] pl-[4px] outline-none"
                    defaultValue="S&P Enterprises needs a cash budget for March. The following information is"
                />
                <button aria-label="Expand formula bar">
                    <Svg w={8} h={7}><path d="M1 1l3 4 3-4" stroke="#666" strokeWidth="2" /></Svg>
                </button>
            </div>
        </div>
    )
}

function Sheet() {
    return (
        <div className="flex h-[549px] font-[Lato,sans-serif]">
            <table className="w-[855px] table-fixed border-separate border-spacing-0 self-start text-[15px] text-[#333]">
                <colgroup>
                    <col className="w-[28px]" />
                    <col className="w-[463px]" />
                    <col className="w-[87px]" />
                    <col className="w-[89px]" />
                    <col className="w-[82px]" />
                    <col className="w-[77px]" />
                    <col />
                </colgroup>
                <thead>
                    <tr className="h-[22px] text-[12px] leading-[18px]">
                        <th aria-label="Select all" className="border-r border-b border-[#b5b5b5] border-b-[#d4d4d4] p-0">
                            <Svg w={13} h={13} className="ml-[10px]"><path d="M13 0v13H0z" fill="#dedede" /></Svg>
                        </th>
                        {COLS.map((c, i) => (
                            <th
                                key={i}
                                className={
                                    i === 0
                                        ? 'border-b-2 border-[#217346] bg-[#e0e0e0] p-0 font-bold text-[#217346]'
                                        : i === 5
                                            ? 'border-b border-[#ababab] p-0'
                                            : 'border-r border-b border-r-[#dcdcdc] border-b-[#ababab] p-0 font-normal'
                                }
                            >
                                {c}
                            </th>
                        ))}
                    </tr>
                </thead>
                <tbody>
                    {ROWS.map((row) => {
                        const span = row.span ?? 1
                        return (
                            <tr key={row.n} className={row.h}>
                                <th className="border-r border-b border-r-[#b5b5b5] border-b-[#d4d4d4] p-0 pr-[6px] text-right align-top text-[13px] leading-[17px] font-normal">
                                    {row.n}
                                </th>
                                <td colSpan={span} className={`border-r border-b border-[#d4d4d4] p-0 pt-px leading-[17px] whitespace-nowrap ${row.indent ?? 'pl-[2px]'}`}>
                                    {row.text}
                                </td>
                                {COLS.slice(span).map((c) => (
                                    <td
                                        key={c}
                                        className={
                                            c === ''
                                                ? 'border-r border-b border-r-[#ababab] border-b-[#d4d4d4] p-0'
                                                : 'border-r border-b border-[#d4d4d4] p-0 pt-px pr-[3px] text-right leading-[17px]'
                                        }
                                    >
                                        {c === 'B' ? row.amount : null}
                                    </td>
                                ))}
                            </tr>
                        )
                    })}
                </tbody>
            </table>
            <div className="ml-[2px] flex w-[18px] flex-col bg-[#e6e6e6]">
                <button aria-label="Scroll up" className="flex h-[19px] items-center justify-center border border-[#ababab]">
                    <Svg w={8} h={4}><path d="M0 4h8L4 0z" fill="#6d6d6d" /></Svg>
                </button>
                <div className="mt-[237px] flex-1 border border-[#ababab] bg-white" />
                <button aria-label="Scroll down" className="mt-px flex h-[19px] items-center justify-center border border-[#ababab]">
                    <Svg w={8} h={4}><path d="M0 0h8L4 4z" fill="#6d6d6d" /></Svg>
                </button>
            </div>
        </div>
    )
}

function SheetTabs() {
    return (
        <div className="flex h-[33px] border-t border-[#ababab] bg-[#f5f5f5] font-['Open_Sans',sans-serif] text-[14px] text-[#222]">
            <div className="flex w-[116px] items-center pb-[3px] pl-[32px] text-[#0e6335]">
                <button aria-label="Previous sheet"><Svg w={5} h={8}><path d="M5 0v8L0 4z" fill="#0e6335" /></Svg></button>
                <button aria-label="Next sheet" className="ml-[28px]"><Svg w={5} h={8}><path d="M0 0v8l5-4z" fill="#0e6335" /></Svg></button>
                <button className="ml-[25px] font-bold">...</button>
            </div>
            <button className="-mt-px h-[26px] w-[117px] border-r border-b-2 border-l border-r-[#ababab] border-b-[#217346] border-l-[#ababab] bg-white pt-[2px] leading-[20px] font-bold text-[#217346]">
                Budget Data
            </button>
            <button className="mt-[3px] h-[22px] w-[226px] border-r border-[#ababab] pb-[3px] leading-[18px]">Schedules and Cash Budget</button>
            <button className="mb-[4px] ml-[10px] font-bold text-[#0e6335]">...</button>
            <button aria-label="New sheet" className="mb-[3px] ml-[15px]">
                <Svg w={18} h={18}>
                    <circle cx="9" cy="9" r="8.200" stroke="#888" strokeWidth="1.300" />
                    <path d="M9 5v8M5 9h8" stroke="#666" strokeWidth="2" />
                </Svg>
            </button>
            <div className="mt-[6px] mr-[21px] ml-auto flex h-[18px] w-[330px] shrink-0 bg-[#e6e6e6]">
                <button aria-label="Scroll left" className="flex w-[18px] items-center justify-center border border-[#ababab]">
                    <Svg w={5} h={8}><path d="M5 0v8L0 4z" fill="#6d6d6d" /></Svg>
                </button>
                <div className="ml-[2px] w-[208px] border border-[#ababab] bg-white" />
                <button aria-label="Scroll right" className="ml-auto flex w-[18px] items-center justify-center border border-[#ababab]">
                    <Svg w={5} h={8}><path d="M0 0v8l5-4z" fill="#6d6d6d" /></Svg>
                </button>
            </div>
        </div>
    )
}

function StatusBar() {
    return (
        <div className="flex h-6 items-center bg-[#217346] font-['Liberation_Sans',sans-serif] text-[12px] text-[#eee]">
            <span className="pl-[12px]">READY</span>
            <div className="mr-[10px] ml-auto flex items-center">
                <button aria-label="Normal view" className="flex h-6 w-[42px] items-center justify-center bg-[#0e6335]">
                    <Svg w={15} h={15}><path d="M.7.700h13.600v13.600H.7zM5 .7v13.600M10 .7v13.600M.7 5h13.600M.7 10h13.600" stroke="#dfe9e0" strokeWidth="1.400" /></Svg>
                </button>
                <button aria-label="Page layout view" className="ml-[14px]">
                    <Svg w={16} h={15}>
                        <path d="M.7.700h14.600v13.600H.7zM3.500 3h9v9h-9z" stroke="#dfe9e0" strokeWidth="1.400" />
                        <path d="M5 5.500h6M5 7.500h6M5 9.500h6" stroke="#dfe9e0" />
                    </Svg>
                </button>
                <button aria-label="Page break view" className="ml-[26px]">
                    <Svg w={16} h={15}>
                        <path d="M.7.700h14.600v13.600H.7z" stroke="#dfe9e0" strokeWidth="1.400" />
                        <path d="M1 0h4v9H1zM6 0h4v9H6z" fill="#dfe9e0" />
                    </Svg>
                </button>
                <button aria-label="Zoom out" className="ml-[20px]"><Svg w={7} h={3}><path d="M0 0h7v3H0z" fill="#fff" /></Svg></button>
                <div className="ml-[4px] flex h-3 w-[110px] items-center justify-center">
                    <Svg w={110} h={12}><path d="M0 5.500h110" stroke="#fff" /><path d="M53 0h4v12h-4z" fill="#fff" /></Svg>
                </div>
                <button aria-label="Zoom in" className="ml-[5px]"><Svg w={9} h={9}><path d="M4.500 0v9M0 4.500h9" stroke="#fff" strokeWidth="2.500" /></Svg></button>
                <span className="ml-[17px] font-bold">100%</span>
            </div>
        </div>
    )
}

function ExcelWindow() {
    return (
        <section className="mt-[9px] ml-[31px] w-[880px] shrink-0 self-start border-2 border-[#5b5b5b] bg-white font-['Noto_Sans',sans-serif]">
            <TitleBar />
            <RibbonTabs />
            <Ribbon />
            <FormulaBar />
            <Sheet />
            <SheetTabs />
            <StatusBar />
            <div className="flex h-6 bg-[#4ab3c4] text-[13px]">
                <span className="h-[22px] w-[90px] bg-black text-center font-['Open_Sans',sans-serif] leading-[22px] font-bold text-white">Attempt(s)</span>
                <div className="mr-[10px] ml-auto flex items-center gap-2 leading-[19px] text-white">
                    <button className="h-[19px] w-[55px] rounded-xs bg-[#c8c8c8]">Hint</button>
                    <button className="h-[19px] w-[77px] rounded-xs bg-[#c8c8c8]">Show Me</button>
                </div>
            </div>
            <div className="h-[37px] border-t border-l border-white bg-black" />
        </section>
    )
}

function Footer() {
    return (
        <footer className="flex h-[65px] shrink-0 items-start border-t border-[#ececec] px-[110px] font-[Inter,'Liberation_Sans',sans-serif] text-[17px] text-[#222]">
            <a href="#home" className="mt-[11px] flex size-11 flex-col bg-[#e21f26] px-[3px] pt-px font-[Lato,sans-serif] text-[14px] leading-[14px] font-black text-white">
                <span>Mc</span>
                <span>Graw</span>
                <span>Hill</span>
            </a>
            <nav className="mx-auto mt-[6px] flex h-[49px] items-center pl-[10px]">
                <a href="#prev" className="flex h-full w-[106px] items-center border-l border-[#ececec] pt-[3px] pl-[21px]">
                    <Svg w={10} h={16}><path d="M8.500 1.500L2 8l6.500 6.500" stroke="#3b76bb" strokeWidth="3" /></Svg>
                    <span className="ml-[17px] underline decoration-dotted decoration-2 underline-offset-2">Prev</span>
                </a>
                <div className="flex h-full w-[144px] items-center border-l border-[#ececec] pt-[3px] pl-[22px]">
                    <b className="text-[#3b76bb]">8</b>
                    <span className="ml-[9px] text-[15px]">of</span>
                    <span className="ml-[8px]">9</span>
                    <button aria-label="Question list" className="ml-[24px]">
                        <Svg w={20} h={20}><path d="M0 0h5.500v5.500H0zM7 0h5.500v5.500H7zM14 0h5.500v5.500H14zM0 7h5.500v5.500H0zM7 7h5.500v5.500H7zM14 7h5.500v5.500H14zM0 14h5.500v5.500H0zM7 14h5.500v5.500H7zM14 14h5.500v5.500H14z" fill="#3b76bb" /></Svg>
                    </button>
                </div>
                <a href="#next" className="flex h-full w-[107px] items-center border-x border-[#ececec] pt-[3px] pl-[21px]">
                    <span className="underline decoration-dotted decoration-2 underline-offset-2">Next</span>
                    <Svg w={10} h={16} className="ml-[16px]"><path d="M1.500 1.500L8 8l-6.500 6.500" stroke="#3b76bb" strokeWidth="3" /></Svg>
                </a>
            </nav>
        </footer>
    )
}

export default function App() {
    return (
        <div className="flex min-h-screen flex-col bg-white font-['Open_Sans','Noto_Sans',sans-serif]">
            <header>
                <BrowserTabs />
                <AddressBar />
            </header>
            <main className="flex flex-1 pl-[110px]">
                <Sidebar />
                <ExcelWindow />
                <div className="mr-[110px] mb-[22px] ml-auto flex w-[17px] flex-col items-center bg-[#f1f1f1] pt-[121px]">
                    <div className="w-[13px] flex-1 bg-[#bdbdbd]" />
                    <Svg w={7} h={4} className="mt-[7px] mb-[6px]"><path d="M0 0h7L3.500 4z" fill="#888" /></Svg>
                </div>
            </main>
            <Footer />
        </div>
    )
}
